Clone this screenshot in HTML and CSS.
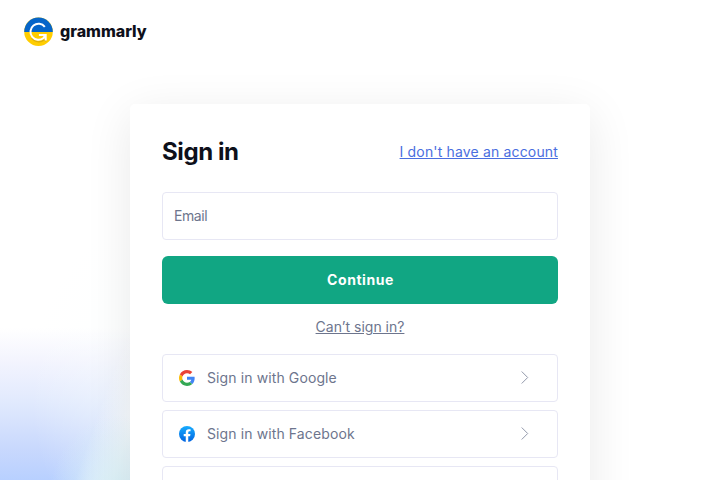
FILE: index.html
```html
<!DOCTYPE html>
<html lang="en">
<head>
<meta charset="utf-8">
<title>Sign in</title>
<link rel="stylesheet" href="styles.css">
</head>
<body>
<header class="header">
  <svg class="logo-mark" viewBox="0 0 29 29">
    <circle cx="14.5" cy="14.7" r="14.3" fill="#ffcd00"/>
    <path fill="#0665c9" d="M.2 14.9a14.3 14.3 0 0 1 28.6 0z"/>
    <path fill="none" stroke="#b98f16" stroke-opacity=".5" stroke-width="1.2" d="M7.5 21c3.2 4.6 9 4.8 12.6 2l2.2 1.2"/>
    <path fill="none" stroke="#fff" stroke-width="2" d="M20.8 9.9A8 8 0 1 0 19.6 20.9L21.4 18.2M14.9 17.9h6.8v5.6"/>
  </svg>
  <span class="wordmark">grammarly</span>
</header>
<main class="card">
  <div class="card-head">
    <h1 class="title">Sign in</h1>
    <a class="signup">I don't have an account</a>
  </div>
  <div class="field">Email</div>
  <div class="submit">Continue</div>
  <a class="help">Can’t sign in?</a>
  <div class="providers">
    <div class="provider">
      <svg class="provider-icon" viewBox="0 0 48 48">
        <path fill="#ea4335" d="M24 9.5c3.54 0 6.71 1.22 9.21 3.6l6.85-6.85C35.9 2.38 30.47 0 24 0 14.62 0 6.51 5.38 2.56 13.22l7.98 6.19C12.43 13.72 17.74 9.5 24 9.5z"/>
        <path fill="#4285f4" d="M46.98 24.55c0-1.57-.15-3.09-.38-4.55H24v9.02h12.94c-.58 2.96-2.26 5.48-4.78 7.18l7.73 6c4.51-4.18 7.09-10.36 7.09-17.65z"/>
        <path fill="#fbbc05" d="M10.53 28.59A14.5 14.5 0 0 1 9.77 24c0-1.6.27-3.14.76-4.59l-7.98-6.19A23.9 23.9 0 0 0 0 24c0 3.88.92 7.54 2.56 10.78l7.97-6.19z"/>
        <path fill="#34a853" d="M24 48c6.48 0 11.93-2.13 15.89-5.81l-7.73-6c-2.15 1.45-4.92 2.3-8.16 2.3-6.26 0-11.57-4.22-13.47-9.91l-7.98 6.19C6.51 42.62 14.62 48 24 48z"/>
      </svg>
      <span class="provider-name">Sign in with Google</span>
      <svg class="chevron" viewBox="0 0 8 13"><path d="M.7 .5l6 6-6 6"/></svg>
    </div>
    <div class="provider">
      <svg class="provider-icon" viewBox="0 0 16 16">
        <defs><linearGradient id="fb" x2="0" y2="1"><stop stop-color="#18acfe"/><stop offset="1" stop-color="#0163e0"/></linearGradient></defs>
        <circle cx="8" cy="8" r="8" fill="url(#fb)"/>
        <path fill="#fff" d="M11.1 10.3l.36-2.3H9.25V6.5c0-.63.31-1.25 1.3-1.25h1V3.3s-.9-.16-1.79-.16c-1.82 0-3 1.1-3 3.1V8H4.7v2.3h2.06V15.9a8 8 0 0 0 2.49 0v-5.6z"/>
      </svg>
      <span class="provider-name">Sign in with Facebook</span>
      <svg class="chevron" viewBox="0 0 8 13"><path d="M.7 .5l6 6-6 6"/></svg>
    </div>
    <div class="provider"></div>
  </div>
</main>
</body>
</html>
```
FILE: styles.css
```css
* { box-sizing: border-box; }
body {
  margin: 0;
  height: 480px;
  overflow: hidden;
  font-family: Inter, sans-serif;
  font-size: 14px;
  color: #6d758d;
  background:
    radial-gradient(ellipse 70px 80px at 120px 495px, rgba(216, 240, 246, .85) 15%, rgba(222, 244, 248, 0)) no-repeat,
    linear-gradient(109deg, transparent 120px, rgba(253, 255, 252, .75) 156px) 0 328px / 180px 152px no-repeat,
    radial-gradient(ellipse 120px 170px at 150px 390px, rgba(250, 255, 255, .4) 20%, rgba(250, 255, 255, 0)) no-repeat,
    linear-gradient(#fff, #f3f4fe 22%, #e0e9fd 50%, #c8d8fd 80%, #b8d0ff) 0 328px / 180px 152px no-repeat,
    #fff;
}
.header { display: flex; align-items: center; height: 63px; padding-left: 24px; }
.logo-mark { width: 29px; height: 29px; margin-right: 7px; }
.wordmark {
  font: 800 16px/24px Inter, sans-serif;
  letter-spacing: 0;
  color: #0e101a;
  margin-top: -1px;
}
.card {
  width: 460px;
  height: 540px;
  margin: 41px auto 0;
  padding: 32px;
  border-radius: 5px;
  background: #fff;
  box-shadow: 0 10px 48px rgba(0, 0, 0, .09);
}
.card-head { display: flex; align-items: center; justify-content: space-between; height: 32px; margin-bottom: 24px; }
.title { margin: 0; font-size: 24px; line-height: 32px; font-weight: 700; letter-spacing: -.4px; color: #0e101a; }
.signup { color: #4a6ee0; letter-spacing: .16px; text-decoration: underline; padding-bottom: 2px; }
.field, .provider { height: 48px; border: 1px solid #e7e7f4; border-radius: 4px; display: flex; align-items: center; }
.field { padding: 0 11px 2px; letter-spacing: -.45px; }
.submit {
  height: 48px;
  margin-top: 16px;
  border-radius: 6px;
  background: #11a683;
  color: #fff;
  font-weight: 700;
  line-height: 48px;
  text-align: center;
  text-indent: 1px;
  letter-spacing: .55px;
}
.help { display: block; margin-top: 13px; line-height: 20px; text-align: center; letter-spacing: 0; text-decoration: underline; }
.providers { display: grid; gap: 8px; margin-top: 17px; }
.provider { padding: 0 28px 0 16px; }
.provider-icon { width: 16px; height: 16px; margin-right: 12px; }
.provider-name { flex: 1; padding-bottom: 2px; letter-spacing: .11px; }
.chevron { width: 8px; height: 13px; margin-bottom: 1px; fill: none; stroke: #9298ab; stroke-width: 1; }
```
